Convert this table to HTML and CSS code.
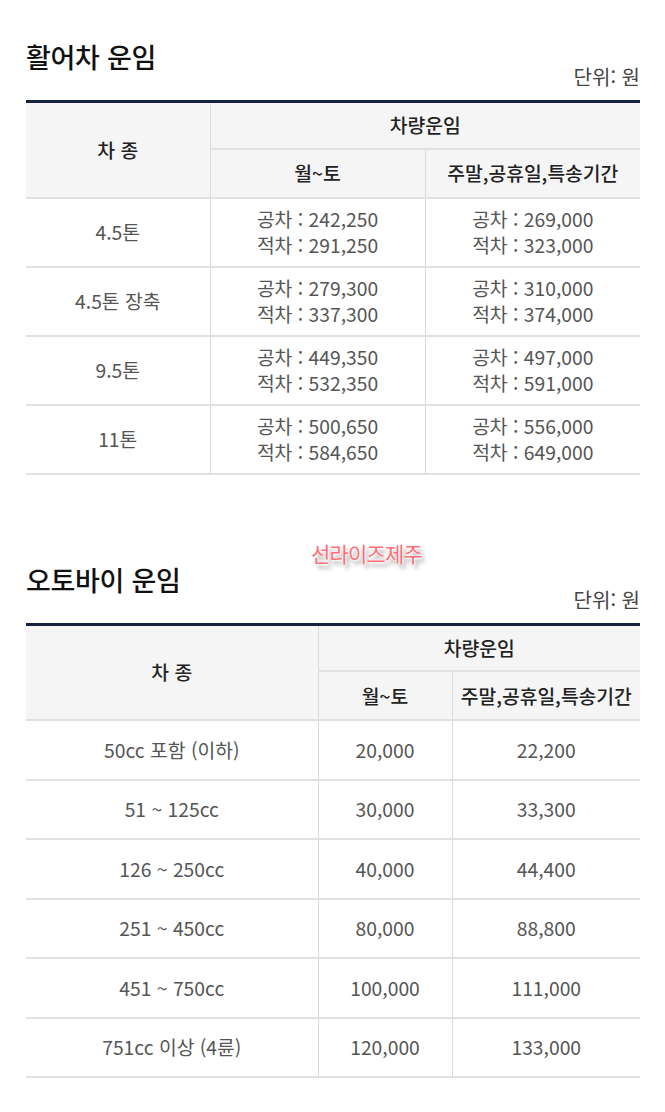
FILE: index.html
```html
<!DOCTYPE html>
<html lang="ko">
<head>
<meta charset="utf-8">
<title>운임</title>
<link rel="stylesheet" href="styles.css">
</head>
<body>
<div class="page">
  <section class="section first">
    <div class="head">
      <h2 class="title">활어차 운임</h2>
      <span class="unit">단위: 원</span>
    </div>
    <table class="fare fare-truck">
      <colgroup>
        <col class="c-kind1"><col class="c-week1"><col class="c-end1">
      </colgroup>
      <thead>
        <tr class="h1">
          <th rowspan="2">차 종</th>
          <th colspan="2">차량운임</th>
        </tr>
        <tr class="h2">
          <th>월~토</th>
          <th>주말,공휴일,특송기간</th>
        </tr>
      </thead>
      <tbody>
        <tr class="r-truck">
          <td>4.5톤</td>
          <td>공차 : 242,250<br>적차 : 291,250</td>
          <td>공차 : 269,000<br>적차 : 323,000</td>
        </tr>
        <tr class="r-truck">
          <td>4.5톤 장축</td>
          <td>공차 : 279,300<br>적차 : 337,300</td>
          <td>공차 : 310,000<br>적차 : 374,000</td>
        </tr>
        <tr class="r-truck">
          <td>9.5톤</td>
          <td>공차 : 449,350<br>적차 : 532,350</td>
          <td>공차 : 497,000<br>적차 : 591,000</td>
        </tr>
        <tr class="r-truck">
          <td>11톤</td>
          <td>공차 : 500,650<br>적차 : 584,650</td>
          <td>공차 : 556,000<br>적차 : 649,000</td>
        </tr>
      </tbody>
    </table>
  </section>

  <section class="section second">
    <div class="head">
      <h2 class="title">오토바이 운임</h2>
      <span class="unit">단위: 원</span>
    </div>
    <table class="fare fare-bike">
      <colgroup>
        <col class="c-kind2"><col class="c-week2"><col class="c-end2">
      </colgroup>
      <thead>
        <tr class="h1">
          <th rowspan="2">차 종</th>
          <th colspan="2">차량운임</th>
        </tr>
        <tr class="h2">
          <th>월~토</th>
          <th>주말,공휴일,특송기간</th>
        </tr>
      </thead>
      <tbody>
        <tr class="r-bike"><td>50cc 포함 (이하)</td><td>20,000</td><td>22,200</td></tr>
        <tr class="r-bike"><td>51 ~ 125cc</td><td>30,000</td><td>33,300</td></tr>
        <tr class="r-bike"><td>126 ~ 250cc</td><td>40,000</td><td>44,400</td></tr>
        <tr class="r-bike"><td>251 ~ 450cc</td><td>80,000</td><td>88,800</td></tr>
        <tr class="r-bike"><td>451 ~ 750cc</td><td>100,000</td><td>111,000</td></tr>
        <tr class="r-bike"><td>751cc 이상 (4륜)</td><td>120,000</td><td>133,000</td></tr>
      </tbody>
    </table>
  </section>

  <div class="watermark">선라이즈제주</div>
</div>
</body>
</html>
```

FILE: styles.css
```css
html, body {
  margin: 0;
  padding: 0;
  background: #ffffff;
}

body {
  font-family: "Noto Sans CJK KR", "Noto Sans", sans-serif;
  color: #555555;
}

.page {
  position: relative;
  padding: 0 25px 0 26px;
}

.section.first {
  padding-top: 38px;
}

.section.second {
  padding-top: 86px;
}

.head {
  display: flex;
  justify-content: space-between;
  align-items: flex-end;
  margin-bottom: 10px;
}

.title {
  margin: 0 0 14px 0;
  font-size: 27px;
  line-height: 38px;
  font-weight: 500;
  color: #111111;
  letter-spacing: -0.3px;
}

.unit {
  font-size: 20px;
  line-height: 26px;
  color: #444444;
}

.fare {
  width: 100%;
  border-collapse: collapse;
  table-layout: fixed;
  border-top: 3px solid #16213f;
  font-size: 19.3px;
  line-height: 26px;
}

.c-kind1 { width: 184px; }
.c-week1 { width: 215px; }
.c-end1 { width: 215px; }

.c-kind2 { width: 292px; }
.c-week2 { width: 134px; }
.c-end2 { width: 188px; }

.fare th,
.fare td {
  padding: 0;
  text-align: center;
  vertical-align: middle;
  border-bottom: 2px solid #e1e1e1;
  border-left: 1px solid #dadada;
}

.fare th:first-child,
.fare td:first-child {
  border-left: none;
}

.fare .h2 th:first-child {
  border-left: 1px solid #dadada;
}

.fare th {
  background: #f5f5f6;
  color: #222222;
  font-weight: 500;
}

.fare td {
  color: #555555;
  font-weight: 400;
}

.fare .h1 { height: 47px; }
.fare .h2 { height: 49px; }

.r-truck { height: 69px; }
.r-bike { height: 59.5px; }

.watermark {
  position: absolute;
  left: 311px;
  top: 539px;
  font-size: 21px;
  line-height: 28px;
  color: #ff6e78;
  letter-spacing: -0.8px;
  text-shadow: 0 0 1px #ffffff, 0 0 2px #ffffff, 1px 1px 2px #ffffff, 3px 4px 4px rgba(0, 0, 0, 0.45);
}
```
